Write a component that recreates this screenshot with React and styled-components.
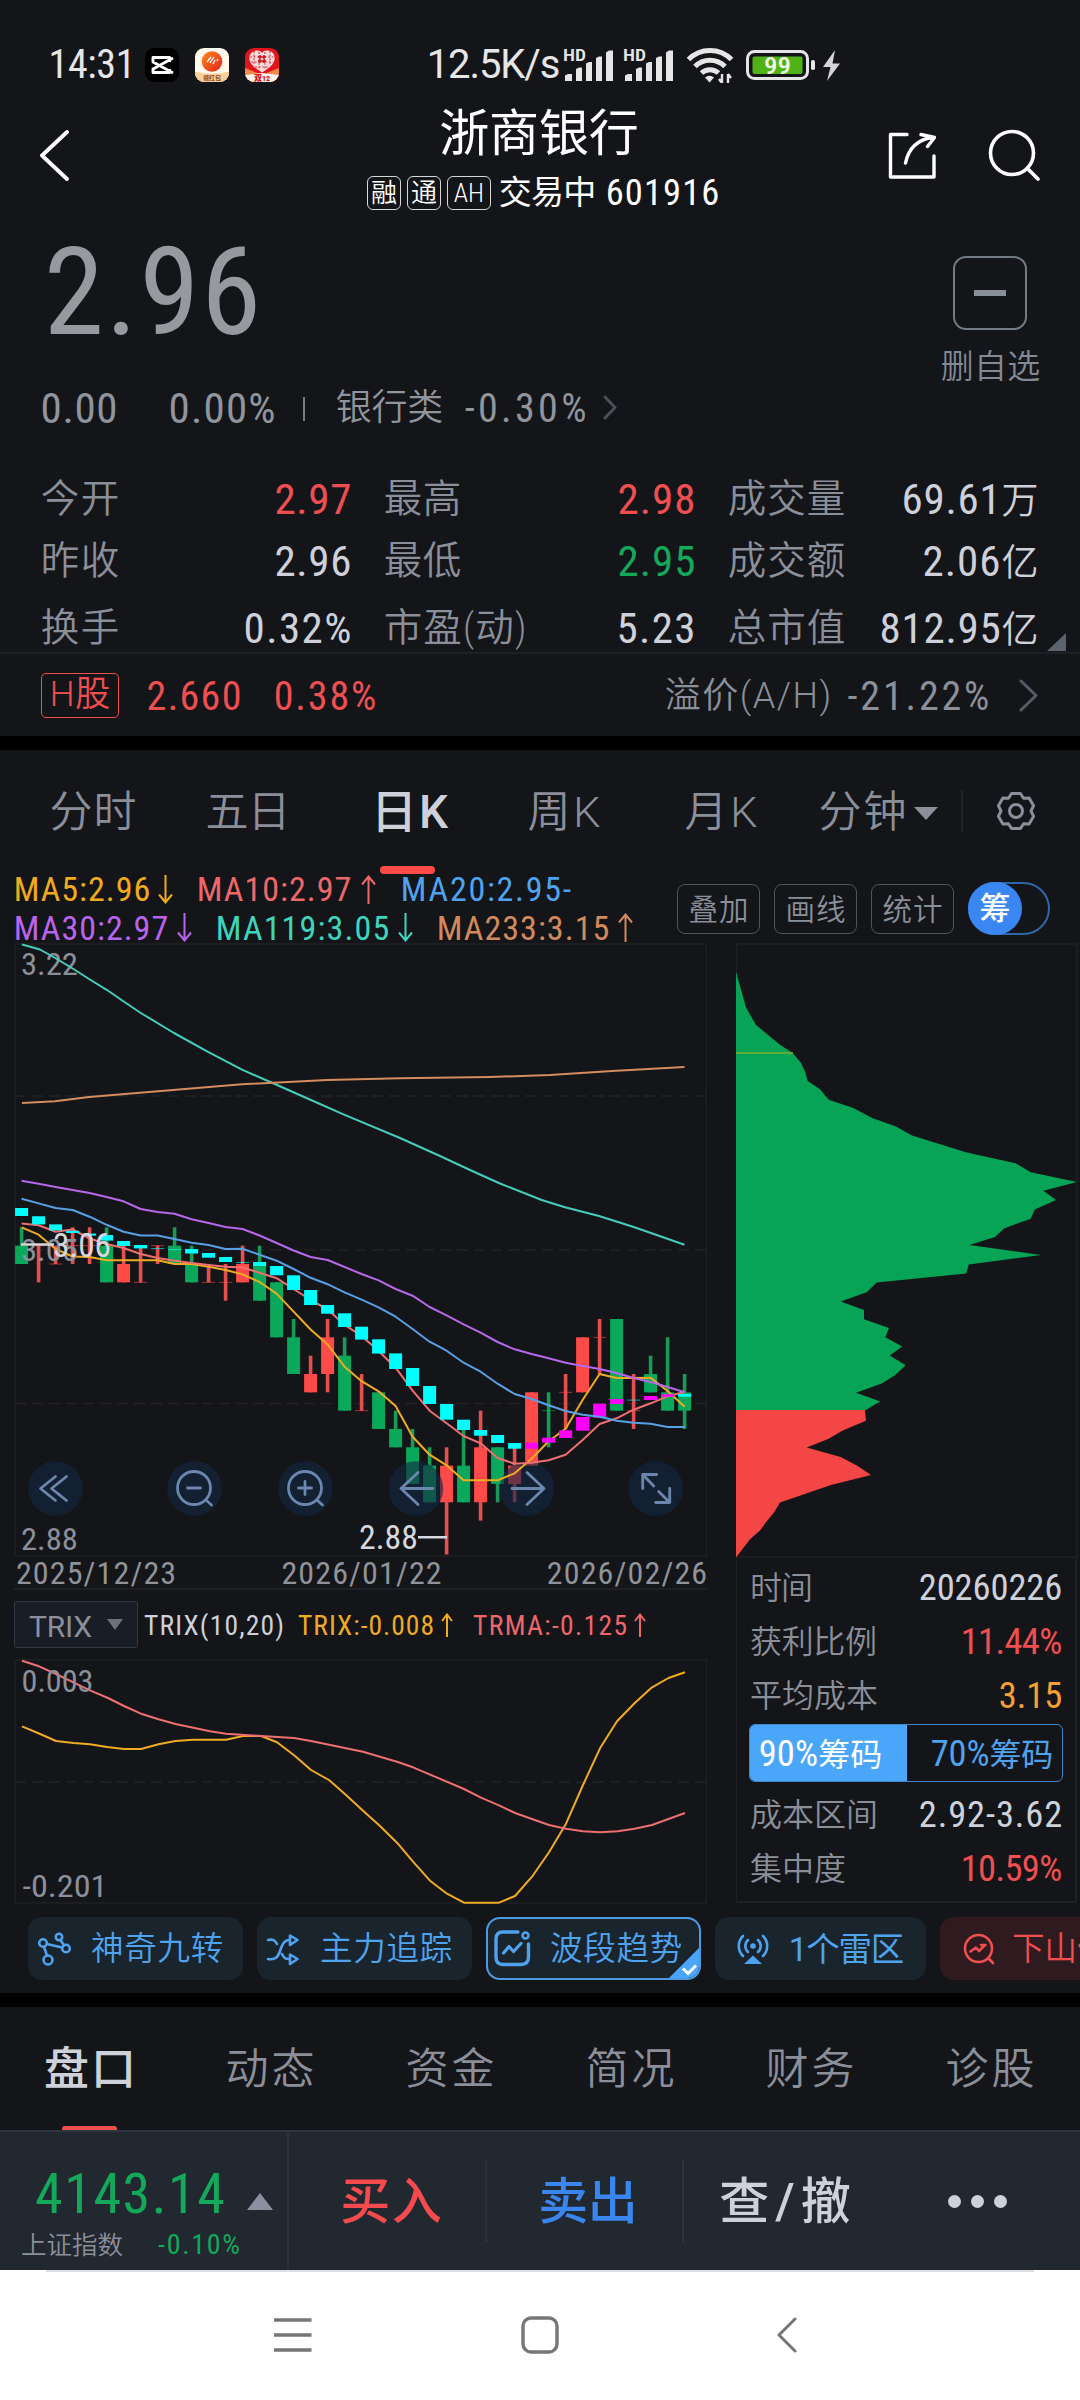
import React, { useLayoutEffect, useRef } from "react";
import styled, { createGlobalStyle, css } from "styled-components";

const c = {
  bg: "#141519",
  line: "#1e2025",
  label: "#8b8f99",
  value: "#ced1d9",
  red: "#f04f50",
  green: "#14a85b",
  blue: "#4fa3ee",
  yellow: "#efab23",
  pink: "#ee676b",
};

const Global = createGlobalStyle`
  body {
    margin: 0;
    background: ${c.bg};
    font-family: Roboto, "Noto Sans CJK SC", sans-serif;
    font-stretch: 86%;
    color: ${c.value};
  }
  * { box-sizing: border-box; }
  svg { display: block; flex: none; }
  svg text { font-family: Roboto, "Noto Sans CJK SC", sans-serif; font-stretch: 86%; }
`;

/* ---------- text that tracks itself to a given ink width ---------- */

const Tracked = styled.span`
  flex: none;
  display: inline-block;
  white-space: nowrap;
  padding-top: ${(p) => p.$drop}px;
  font-size: ${(p) => p.$size}px;
  font-weight: ${(p) => p.$weight || 400};
  font-stretch: ${(p) => p.$stretch || 86}%;
  color: ${(p) => p.$color || "inherit"};
  line-height: ${(p) => p.$lh || 1.1};
`;

function Text({ w, size, weight, color, lh, stretch, drop = 3, children }) {
  const ref = useRef(null);
  useLayoutEffect(() => {
    const el = ref.current;
    el.style.letterSpacing = "0px";
    const n = el.textContent.length;
    const natural = el.getBoundingClientRect().width;
    const side = size * 0.035;
    const ls = n > 1 ? (w + side * 2 - natural) / (n - 1) : 0;
    el.style.letterSpacing = `${ls}px`;
    el.style.marginLeft = `${-side}px`;
    el.style.marginRight = `${-ls - side}px`;
  });
  return (
    <Tracked ref={ref} $size={size} $weight={weight} $color={color} $lh={lh} $stretch={stretch} $drop={drop}>
      {children}
    </Tracked>
  );
}

const Screen = styled.div`
  width: 1080px;
  height: 2400px;
  overflow: hidden;
  background: ${c.bg};
  display: flex;
  flex-direction: column;
`;

const Space = styled.div`
  flex: none;
  width: ${(p) => p.$w}px;
`;

const Band = styled.div`
  flex: none;
  height: 14px;
  background: #000;
`;

/* ---------- status bar ---------- */

const StatusBar = styled.div`
  flex: none;
  height: 94px;
  padding: 35px 0 0 50px;
  display: flex;
  align-items: center;
  color: #e6e6e6;
`;

const CutIcon = () => (
  <svg width="34" height="34" viewBox="0 0 34 34">
    <rect width="34" height="34" rx="9" fill="#000" />
    <path d="M28 10 8 21v3.500h16.500V21M28 25 8 14V9.500h16.500V14" fill="none" stroke="#fff" strokeWidth="2.900" strokeLinejoin="round" />
  </svg>
);

const SunIcon = () => (
  <svg width="34" height="34" viewBox="0 0 34 34">
    <defs>
      <clipPath id="sunClip"><rect width="34" height="34" rx="9" /></clipPath>
      <linearGradient id="sunFill" x1="0" y1="0" x2="1" y2="1">
        <stop offset="0" stopColor="#ff8a1e" />
        <stop offset="1" stopColor="#e2211c" />
      </linearGradient>
    </defs>
    <g clipPath="url(#sunClip)">
      <rect width="34" height="34" fill="#fff8ec" />
      <circle cx="17" cy="13.500" r="10.300" fill="url(#sunFill)" />
      <path d="M0 23.500Q17 28 34 23.500V34H0Z" fill="#f8cf97" />
      <path d="M12 14l4-5M15 15l4-6M18 16l2-4M22 13l1-2" stroke="#fff" strokeWidth="1.300" />
      <text x="17" y="31.500" fontSize="6" fontWeight="700" fill="#8a4a1c" textAnchor="middle">领红包</text>
    </g>
  </svg>
);

const HeartIcon = () => (
  <svg width="34" height="34" viewBox="0 0 34 34">
    <defs><clipPath id="heartClip"><rect width="34" height="34" rx="9" /></clipPath></defs>
    <g clipPath="url(#heartClip)">
      <rect width="34" height="34" fill="#df151d" />
      <path d="M17 5C13 0 3 3 4.500 12 6 18 12 21 17 24.500 22 21 28 18 29.500 12 31 3 21 0 17 5Z" fill="#f9dcdc" />
      <path d="M5 9h24M6 14h22M10 19h14M9 3v15M14 4v18M20 4v18M25 3v15" stroke="#d83a40" strokeWidth="1.200" strokeDasharray="2 1.600" />
      <path d="M13 9h8M13 13h8M15 7v8M19 7v8" stroke="#cf1119" strokeWidth="1.500" />
      <path d="M0 20 17 27 34 20V34H0Z" fill="#f08a4b" />
      <path d="M0 27 17 25 34 27V34H0Z" fill="#fff3ee" />
      <text x="17" y="33" fontSize="8" fontWeight="800" fill="#cf1119" textAnchor="middle">双12</text>
    </g>
  </svg>
);

const Signal = () => (
  <svg width="52" height="36" viewBox="0 0 52 36">
    <text x="0" y="14" fontSize="16" fontWeight="600" fill="#e6e6e6" textLength="23" lengthAdjust="spacingAndGlyphs">HD</text>
    <g fill="#e6e6e6">
      <path d="M2 34V28.500l3-1.500h4v7Z" />
      <path d="M13 34V22l3-1.500h3V34Z" />
      <path d="M23 34V16.500l3-1.500h3V34Z" />
      <path d="M33 34V11l3-1.500h3V34Z" />
      <path d="M43 34V5.500l3-2h4V34Z" />
    </g>
  </svg>
);

const Wifi = () => (
  <svg width="48" height="36" viewBox="0 0 48 36">
    <g fill="none" stroke="#e6e6e6" strokeWidth="5">
      <path d="M2.500 12.500a30 30 0 0 1 43 0" />
      <path d="M9 19.500a21 21 0 0 1 30 0" />
      <path d="M15.500 26a12.500 12.500 0 0 1 17 0" />
    </g>
    <path d="M19 30.500a7 7 0 0 1 9 0l-4.500 5Z" fill="#e6e6e6" />
    <path d="M36 27v9m-3-4 3 4M42 36v-9m3 4-3-4" stroke="#e6e6e6" strokeWidth="2.400" fill="none" />
  </svg>
);

const Battery = () => (
  <svg width="96" height="34" viewBox="0 0 96 34">
    <rect x="1.500" y="3.500" width="60" height="27" rx="7" fill="none" stroke="#e6e6e6" strokeWidth="3" />
    <rect x="6.500" y="8.500" width="50" height="17.500" rx="2" fill="#4fb215" />
    <rect x="65" y="12" width="4" height="10" rx="1.800" fill="#e6e6e6" />
    <text x="31.500" y="26" fontSize="24" fontWeight="500" fill="#f2fbe8" textAnchor="middle" textLength="27" lengthAdjust="spacingAndGlyphs">99</text>
    <path d="M89 2 77 19h7.500l-3.500 14L94 15.500h-7.500L89 2Z" fill="#d4d4d4" />
  </svg>
);

/* ---------- title bar ---------- */

const Header = styled.header`
  flex: none;
  height: 122px;
  display: grid;
  grid-template-columns: 300px 1fr 300px;
  align-items: center;
`;

const HeaderSide = styled.div`
  display: flex;
  align-items: center;
  justify-content: ${(p) => (p.$end ? "flex-end" : "flex-start")};
  padding: 0 ${(p) => (p.$end ? 40 : 0)}px 0 ${(p) => (p.$end ? 0 : 40)}px;
  gap: 52px;
`;

const TitleBlock = styled.div`
  display: flex;
  flex-direction: column;
  align-items: center;
  gap: 12px;
  color: #fff;
  padding-right: 2px;
`;

const SubTitle = styled.div`
  display: flex;
  align-items: center;
  height: 34px;
  padding-left: 7px;
`;

const Tag = styled.span`
  height: 34px;
  width: ${(p) => p.$w}px;
  margin-right: 6px;
  border: 1.5px solid #d6d7d8;
  border-radius: 6px;
  display: flex;
  align-items: center;
  justify-content: center;
  font-size: 26px;
  font-weight: 350;
  line-height: 30px;
`;

/* ---------- quote ---------- */

const Quote = styled.section`
  flex: none;
  height: 234px;
  display: flex;
  justify-content: space-between;
  padding: 0 41px 0 42px;
`;

const PriceLine = styled.div`
  height: 148px;
  display: flex;
  align-items: center;
  padding-left: 6px;
`;

const ChangeLine = styled.div`
  height: 86px;
  display: flex;
  align-items: center;
  color: #90949c;
`;

const Tick = styled.i`
  width: 2px;
  height: 24px;
  margin-top: 4px;
  background: #777b83;
`;

const Watch = styled.div`
  padding-top: 40px;
  display: flex;
  flex-direction: column;
  align-items: center;
  gap: 15px;
`;

const MinusBox = styled.div`
  width: 74px;
  height: 74px;
  border: 2px solid #727b83;
  border-radius: 13px;
  display: flex;
  align-items: center;
  justify-content: center;
  &::after {
    content: "";
    width: 32px;
    height: 6px;
    background: #87909a;
  }
`;

const Stats = styled.section`
  flex: none;
  position: relative;
  height: 204px;
  padding: 17px 44px 0 42px;
  border-bottom: 2px solid ${c.line};
`;

const StatRow = styled.div`
  display: grid;
  grid-template-columns: 308px 309px 308px;
  column-gap: 35px;
  height: ${(p) => (p.$last ? 52 : 62)}px;
  margin-top: ${(p) => (p.$last ? 10 : 0)}px;
`;

const Stat = styled.div`
  display: flex;
  align-items: center;
  justify-content: space-between;
`;

const Unit = styled.span`
  font-size: 37px;
  font-weight: 350;
`;

const Corner = styled.i`
  position: absolute;
  right: 14px;
  bottom: 1px;
  border-left: 19px solid transparent;
  border-bottom: 18px solid #5c636e;
`;

const HShare = styled.section`
  flex: none;
  height: 82px;
  padding: 0 42px 0 41px;
  display: flex;
  align-items: center;
  color: ${c.red};
`;

const HTag = styled.span`
  width: 78px;
  height: 45px;
  border: 1.5px solid ${c.red};
  border-radius: 5px;
  display: flex;
  align-items: center;
  justify-content: center;
`;

const Grow = styled.div`
  flex: 1;
`;

const Chevron = ({ w, h, color, sw = 3, left }) => (
  <svg width={w} height={h} viewBox={`0 0 ${w} ${h}`}>
    <path
      d={left ? `M${w - 2} 2 2 ${h / 2} ${w - 2} ${h - 2}` : `M2 2 ${w - 2} ${h / 2} 2 ${h - 2}`}
      fill="none" stroke={color} strokeWidth={sw} strokeLinecap="round" strokeLinejoin="round"
    />
  </svg>
);

/* ---------- period tabs ---------- */

const Periods = styled.nav`
  flex: none;
  height: 124px;
  padding-left: 15px;
  display: flex;
`;

const Period = styled.div`
  position: relative;
  width: ${(p) => p.$w}px;
  height: 122px;
  display: flex;
  align-items: center;
  justify-content: ${(p) => (p.$start ? "flex-start" : "center")};
  ${(p) => p.$active && css`
    padding-right: 3px;
    &::after {
      content: "";
      position: absolute;
      bottom: -2px;
      left: calc(50% - 31px);
      width: 55px;
      height: 8px;
      border-radius: 4px;
      background: #ff4a4a;
    }
  `}
`;

const Gear = () => (
  <svg width="42" height="42" viewBox="0 0 42 42" fill="none" stroke="#8b8f99" strokeWidth="3" strokeLinejoin="round">
    <path d="M16.500 3.500h9l3 4.700 5.600-.3 4.500 7.800-2.600 5.300 2.600 5.300-4.500 7.800-5.600-.3-3 4.700h-9l-3-4.700-5.600.3-4.500-7.800L6 21l-2.600-5.300 4.500-7.800 5.600.3Z" />
    <circle cx="21" cy="21" r="6.500" />
  </svg>
);

/* ---------- legend ---------- */

const Legend = styled.div`
  flex: none;
  height: 69px;
  padding: 0 30px 0 15px;
  display: flex;
  align-items: center;
  justify-content: space-between;
`;

const LegendLine = styled.div`
  height: 38.5px;
  display: flex;
  align-items: center;
`;

const Tools = styled.div`
  display: flex;
  align-items: center;
  gap: 14px;
`;

const Tool = styled.div`
  width: 83px;
  height: 50px;
  border: 1.5px solid #50545e;
  border-radius: 8px;
  display: flex;
  align-items: center;
  justify-content: center;
  color: ${c.label};
`;

const Switch = styled.div`
  width: 82px;
  height: 53px;
  border: 2px solid #2f66a8;
  border-radius: 27px;
  display: flex;
  align-items: center;
`;

const Knob = styled.div`
  width: 54px;
  height: 53px;
  margin-left: -2px;
  border-radius: 27px;
  background: #3a86f3;
  color: #fff;
  font-size: 31px;
  font-weight: 500;
  line-height: 53px;
  text-align: center;
`;

const Arrow = ({ up, color, h = 29, w = 15 }) => (
  <svg width={w} height={h} viewBox={`0 0 ${w} ${h}`} fill="none" stroke={color} strokeWidth="2">
    {up ? <path d={`M${w / 2} ${h}V2M1 ${w / 2 + 2} ${w / 2} 1.500l${w / 2 - 1} ${w / 2 + 0.5}`} />
      : <path d={`M${w / 2} 0V${h - 2}M1 ${h - w / 2 - 2} ${w / 2} ${h - 1.5}l${w / 2 - 1} ${-w / 2 - 0.5}`} />}
  </svg>
);

/* ---------- charts ---------- */

const Body = styled.div`
  flex: none;
  display: flex;
  gap: 29px;
  padding-left: 14px;
`;

const Column = styled.div`
  width: ${(p) => p.$w}px;
  display: flex;
  flex-direction: column;
`;

const Dates = styled.div`
  height: 33px;
  padding: 0 1px 0 3px;
  border-bottom: 2px solid ${c.line};
  display: flex;
  align-items: center;
  justify-content: space-between;
  color: #909399;
`;

const IndicatorBar = styled.div`
  height: 69px;
  display: flex;
  align-items: center;
`;

const Picker = styled.div`
  width: 124px;
  height: 47px;
  padding: 0 14px 0 15px;
  background: #191d25;
  border: 1.5px solid #323843;
  border-radius: 3px;
  display: flex;
  align-items: center;
  justify-content: space-between;
`;

const at = (i) => 21.6 + 17 * i;
const lv = (n) => 1319 + 18.33 * n;

/* direction, high, body top, body bottom, low — in one-cent steps */
const candles = [
  ["g", -5, -4, -3, -3], ["r", -4, -4, -4, -2], ["r", -4, -3, -3, -3], ["r", -5, -4, -4, -3], ["r", -5, -4, -4, -3],
  ["g", -5, -4, -2, -2], ["r", -4, -3, -2, -2], ["r", -4, -2, -2, -2], ["r", -4, -4, -4, -3], ["g", -5, -4, -3, -3],
  ["g", -4, -3, -2, -2], ["r", -3, -2, -2, -2], ["r", -3, -2, -2, -1], ["r", -4, -3, -2, -2], ["g", -4, -3, -1, -1],
  ["g", -2, -2, 1, 1], ["g", 0, 1, 3, 3], ["r", 2, 3, 4, 4], ["r", 0, 1, 3, 4], ["g", 1, 2, 5, 5],
  ["r", 3, 5, 5, 5], ["g", 4, 4, 6, 6], ["g", 5, 6, 7, 7], ["g", 6, 7, 9, 9], ["g", 7, 8, 10, 10],
  ["r", 7, 8, 10, 12.85], ["g", 6, 8, 10, 10], ["r", 5, 7, 10, 11], ["g", 7, 7, 9, 10], ["r", 7, 8, 9, 10],
  ["r", 4, 4, 8, 8], ["g", 4, 5, 5, 7], ["r", 3, 4, 4, 6], ["r", 1, 1, 4, 4], ["r", 0, 1, 1, 3],
  ["g", 0, 0, 5, 5], ["r", 3, 5, 5, 6], ["g", 2, 3, 4, 4], ["g", 1, 4, 5, 5], ["g", 3, 4, 5, 6],
];

/* trend blocks: top, bottom */
const blocks = [
  [1208, 1216], [1216.3, 1224.4], [1224.4, 1230.4], [1230.8, 1233], [1233.6, 1235.6], [1235, 1240.6], [1241, 1246],
  [1245, 1248.4], [1248, 1249], [1249, 1250], [1249, 1253.5], [1253, 1257.7], [1257, 1262], [1262, 1263], [1262, 1266],
  [1266, 1275.3], [1275.3, 1290], [1290, 1305], [1305, 1313.7], [1313.3, 1327], [1326.7, 1339.6], [1339.3, 1353.6],
  [1353.4, 1369], [1368, 1386], [1386, 1404], [1404, 1419.7], [1419.7, 1430], [1430, 1435.7], [1435, 1443], [1443, 1448.7],
  [1442.7, 1448.7], [1437.7, 1442.7], [1430.3, 1438], [1417, 1430.7], [1403.7, 1417.7], [1399, 1404], [1399.6, 1400.6],
  [1396, 1400], [1394.3, 1396.7], [1394, 1396.7],
];

const ma5 = [1227.4, 1234.7, 1249, 1256.5, 1257, 1260.3, 1260.3, 1260.3, 1260.3, 1264, 1264, 1266.7, 1270, 1274.4, 1282, 1293.6, 1311.6, 1329.5, 1344.5, 1366.7, 1381.2, 1391.3, 1406, 1436.7, 1454.7, 1465.3, 1480.3, 1480.3, 1480.3, 1473.3, 1458.7, 1441.3, 1428.7, 1400, 1374, 1378, 1378, 1377.7, 1391, 1406.7];
const ma10 = [1223.5, 1225.3, 1231.7, 1229.5, 1238.5, 1244, 1248, 1254, 1258, 1260.7, 1263, 1265, 1266.7, 1267.5, 1272.7, 1278.2, 1289, 1300, 1309.4, 1324.8, 1336, 1351, 1367.7, 1390.7, 1410.7, 1423.3, 1436, 1443.3, 1458, 1463.7, 1462.7, 1460.3, 1454.7, 1440, 1424, 1418.3, 1409.7, 1403.3, 1396.3, 1392];
const ma20 = [1198.8, 1203.4, 1208, 1210, 1216.7, 1224.8, 1231.7, 1235.5, 1235.5, 1239, 1242.8, 1245, 1249, 1248.8, 1254.7, 1260.7, 1269, 1277.8, 1284.2, 1292.4, 1299.6, 1307.3, 1316.7, 1329, 1341.7, 1350.7, 1362.7, 1371.7, 1383.7, 1394, 1399, 1405.3, 1411, 1414.7, 1416.7, 1420.7, 1422.7, 1423.7, 1427, 1427];
const ma30 = [1180.8, 1183.8, 1187, 1190, 1193, 1197, 1201.3, 1209, 1212, 1213.7, 1219.3, 1223, 1227, 1229, 1235.5, 1243, 1250.5, 1257, 1260, 1267, 1274, 1280.4, 1289, 1295.7, 1307, 1315.3, 1324.3, 1332.7, 1342, 1349.3, 1354, 1358.3, 1362.7, 1366, 1369, 1373, 1378, 1382, 1387, 1392.3];
const ma119 = "22,944.5 40,949.5 56,958.5 72.7,968.5 89,979 106.7,989.8 123,1001 140,1012.5 174,1033 208,1051.8 242,1069.7 277,1085 311,1100 344,1114.6 400,1138 440,1156 470,1170 500,1183.5 541.7,1200 565,1207.3 599,1216 633,1226.7 684.5,1244.7";
const ma233 = "22,1103 55,1101.3 89,1097 140,1092.8 242,1084.3 327,1080 400,1078.3 490,1077 550,1075 612,1071 684.5,1067";

const series = (ys) => ys.map((y, i) => `${at(i)},${y}`).join(" ");

const trix = "22,1726.3 39,1733.5 56,1741 73.5,1743 90,1744.3 107,1747 124,1749 141,1749 158.5,1744.3 175.5,1741 193,1739.7 226,1739.7 243,1736 261,1736 277,1742.3 295,1756 311,1770 329,1780 346,1795 363,1810.7 380,1826 397,1842.7 413,1861.7 430,1880.7 447,1893.7 464,1902.7 499,1902.7 515,1896 532,1876.7 549,1852.3 566,1823.7 583,1785 600,1748.3 617,1721.3 634.5,1703.3 652,1687.3 668.5,1678 685,1672.3";
const trma = "22,1660.7 39,1666.3 56,1674 90,1690.3 108,1698 124,1706 141,1713.7 158.5,1719.3 175.5,1724 210,1731.3 226,1733.7 261,1736 294,1738 311,1741 363,1751.7 397,1761.7 413,1767.3 464,1789 481,1797.7 499,1805.3 515,1813 549,1825 566,1828.7 583,1831.3 600,1832.3 617.5,1831.3 634.5,1828.7 652,1825 685,1813";

const chipsGreen = "736,971.7 746,1007.5 756,1025 780,1044.7 792.7,1053 800.7,1062.6 805.3,1072.2 807.7,1081 820,1089.2 828.7,1099.8 853.3,1108 872.7,1118.2 896,1126.4 912,1135.6 966.7,1152.6 1015.7,1163.2 1030.7,1172.3 1077,1182 1043.3,1190.7 1056,1199.9 1034.7,1209.5 1030.7,1218.7 1004,1228.4 995,1237 969.3,1245 1041.3,1255 968.7,1264.6 966.3,1273.4 876.7,1282.5 866.7,1292.2 840.7,1301.4 864,1310 864,1319.3 889,1328 885.3,1337.2 902.3,1346.4 889.7,1355.6 905.7,1365.2 895,1375.3 881.7,1383.6 856,1392.8 880.3,1401.5 865.7,1410 736,1410";
const chipsRed = "736,1410 865,1410 866,1420.8 842.7,1430.4 828.7,1438.7 806.7,1447.4 840.7,1457 857.3,1465.8 871,1475 831,1485 780,1502.5 774,1512.6 766,1522.2 760,1530.5 750,1539.2 736,1557.6";

const Line = ({ points, color }) => (
  <polyline points={points} fill="none" stroke={color} strokeWidth="2" strokeLinejoin="round" />
);

const Mark = ({ x, y, w, size, color, children }) => (
  <text x={x} y={y} fontSize={size} fill={color} textLength={w} lengthAdjust="spacingAndGlyphs">{children}</text>
);

const RoundButton = ({ x, children }) => (
  <g transform={`translate(${x} 1488.5)`} fill="none" stroke="#6c86ae" strokeWidth="2.8" strokeLinecap="round" strokeLinejoin="round">
    <circle r="27.300" fill="#142742" fillOpacity=".62" stroke="none" />
    {children}
  </g>
);

const KChart = () => (
  <svg width="693" height="614" viewBox="14 943 693 614">
    <rect x="15" y="944" width="691.500" height="612" fill="none" stroke={c.line} strokeWidth="1.500" />
    {[1096, 1250, 1403.5].map((y) => (
      <path key={y} d={`M15 ${y}H706`} stroke="#212328" strokeWidth="1.500" strokeDasharray="11 6" />
    ))}
    <Mark x="21" y="975" w="57" size="31.500" color="#8b8f99">3.22</Mark>
    <Mark x="21" y="1550" w="57" size="31.500" color="#8b8f99">2.88</Mark>
    {candles.map(([dir, hi, top, bot, lo], i) => {
      const fill = dir === "g" ? "#0aa85a" : "#ff4a4a";
      const flat = top === bot;
      return (
        <g key={i}>
          <rect x={at(i) - 1.8} y={lv(hi)} width="3.600" height={lv(lo) - lv(hi)} fill={dir === "g" ? "#199a56" : "#e5504f"} />
          {flat
            ? <rect x={at(i) - 6.5} y={lv(top) - 0.5} width="13" height="1" fill={fill} opacity=".6" />
            : <rect x={at(i) - 6.5} y={lv(top)} width="13" height={lv(bot) - lv(top)} fill={fill} />}
        </g>
      );
    })}
    <RoundButton x={55.5}><path d="M0-12-15 0 0 12M11-12-4 0 11 12" /></RoundButton>
    <RoundButton x={194.5}><circle r="16.500" cx="-.5" cy="-.5" /><path d="M-7-.5H6M12 12 17 16.500" /></RoundButton>
    <RoundButton x={305.5}><circle r="16.500" cx="-.5" cy="-.5" /><path d="M-7-.5H6M-.5-7V6M12 12 17 16.500" /></RoundButton>
    <RoundButton x={416}><path d="M2-16-15 0 2 16M-15 0H17" /></RoundButton>
    <RoundButton x={527}><path d="M0-16 17 0 0 16M17 0H-15" /></RoundButton>
    <RoundButton x={655.7}><path d="M-13 0V-14H1M-13-14-2-2.500M14 0V14H0M14 14 3 3" /></RoundButton>
    <Line points={series(ma5)} color={c.yellow} />
    <Line points={series(ma10)} color="#ee6f70" />
    {blocks.map(([t, b], i) => (
      <rect key={i} x={at(i) - 6.5} y={t} width="13" height={b - t} opacity={b - t < 1.5 ? 0.6 : 1} fill={i > 29 && i < 39 && i !== 36 ? "#ff00ff" : "#00ffff"} />
    ))}
    <Line points={series(ma20)} color="#58a0e6" />
    <Line points={series(ma30)} color="#b568e8" />
    <Line points={ma119} color="#45cdb9" />
    <Line points={ma233} color="#d58c5f" />
    <Mark x="21" y="1261" w="57" size="31.500" color="#8b8f99">3.05</Mark>
    <path d="M21 1244.500H54M418 1537.300H447" stroke="#d6d8dd" strokeWidth="2.400" />
    <Mark x="53" y="1257" w="58" size="34" color="#d6d8dd">3.06</Mark>
    <Mark x="359" y="1549" w="59" size="34" color="#d6d8dd">2.88</Mark>
  </svg>
);

const TrixChart = () => (
  <svg width="693" height="245" viewBox="14 1659 693 245">
    <rect x="15" y="1660" width="691.500" height="243" fill="none" stroke={c.line} strokeWidth="1.500" />
    <path d="M15 1782H706" stroke="#212328" strokeWidth="1.500" strokeDasharray="11 6" />
    <Line points={trix} color={c.yellow} />
    <Line points={trma} color="#ee6f70" />
    <Mark x="21.500" y="1692" w="72" size="32" color="#8b8f99">0.003</Mark>
    <Mark x="22.500" y="1897" w="85" size="32" color="#8b8f99">-0.201</Mark>
  </svg>
);

const ChipChart = () => (
  <svg width="344" height="615" viewBox="736 943 344 615">
    <rect x="736.500" y="944" width="340.500" height="613" fill="none" stroke={c.line} strokeWidth="1.500" />
    <polygon points={chipsGreen} fill="#08a455" />
    <polygon points={chipsRed} fill="#f54646" />
    <path d="M736 1053H793" stroke="#7fae34" strokeWidth="1.500" />
  </svg>
);

const Info = styled.div`
  width: 341px;
  height: 345px;
  padding: 2px 14px 0;
  border: solid ${c.line};
  border-width: 0 2px 2px 1px;
`;

const InfoRow = styled.div`
  height: 54px;
  display: flex;
  align-items: center;
  justify-content: space-between;
`;

const Range = styled.div`
  height: 58px;
  width: 314px;
  margin: 2px 0 5px -2px;
  border: 1.5px solid #3f86c9;
  border-radius: 6px;
  display: flex;
  overflow: hidden;
`;

const RangeSide = styled.div`
  flex: ${(p) => (p.$on ? "0 0 157px" : "1")};
  padding-left: ${(p) => (p.$on ? 10 : 25)}px;
  display: flex;
  align-items: center;
  background: ${(p) => (p.$on ? "#4aa6f8" : "transparent")};
  color: ${(p) => (p.$on ? "#fff" : c.blue)};
`;

const Small = styled.span`
  font-size: 32px;
`;

/* ---------- strategy chips ---------- */

const ChipRow = styled.div`
  flex: none;
  height: 89px;
  padding: 13px 0 0 28px;
  display: flex;
  gap: 14px;
  overflow: hidden;
`;

const Chip = styled.div`
  flex: none;
  position: relative;
  width: ${(p) => p.$w}px;
  height: 63px;
  padding-left: ${(p) => p.$pad}px;
  border-radius: 14px;
  border: 2px solid ${(p) => (p.$on ? "#4c9be2" : "transparent")};
  background: ${(p) => (p.$warn ? "#2f1b1f" : "#1a242d")} border-box;
  color: ${(p) => (p.$warn ? c.red : c.blue)};
  display: flex;
  align-items: center;
  overflow: hidden;
`;

const Picked = styled.svg`
  position: absolute;
  right: -1px;
  bottom: -1px;
`;

const Glyph = styled.svg`
  fill: none;
  stroke: currentColor;
  stroke-width: 2.6;
  stroke-linecap: round;
  stroke-linejoin: round;
  margin-right: ${(p) => p.$mr}px;
`;

/* ---------- bottom ---------- */

const Sections = styled.nav`
  flex: none;
  height: 123px;
  display: grid;
  grid-template-columns: repeat(6, 180px);
`;

const SectionTab = styled.div`
  position: relative;
  display: flex;
  align-items: center;
  justify-content: center;
  color: ${(p) => (p.$active ? c.value : c.label)};
  &::after {
    content: "";
    display: ${(p) => (p.$active ? "block" : "none")};
    position: absolute;
    bottom: 0;
    left: 62px;
    width: 55px;
    height: 4px;
    border-radius: 3px 3px 0 0;
    background: #f04f50;
  }
`;

const TradeBar = styled.div`
  flex: none;
  height: 140px;
  background: #222830;
  border-top: 2px solid #2d3540;
  display: grid;
  grid-template-columns: 289px 197px 197px 197px 200px;
`;

const IndexCell = styled.div`
  border-right: 2px solid #2c323a;
  padding-top: 29px;
`;

const IndexLine = styled.div`
  height: ${(p) => p.$h}px;
  padding-left: ${(p) => p.$pl}px;
  display: flex;
  align-items: center;
`;

const Up = styled.i`
  margin: 18px 0 0 24px;
  border: 13px solid transparent;
  border-top: 0;
  border-bottom: 17px solid #8b90a0;
`;

const Action = styled.div`
  display: flex;
  align-items: center;
  justify-content: center;
  gap: 10px;
  position: relative;
  padding-left: ${(p) => (p.$more ? 0 : 7)}px;
  padding-right: ${(p) => (p.$more ? 5 : 0)}px;
  & + &::before {
    content: "";
    position: absolute;
    left: -1px;
    top: 28px;
    width: 2px;
    height: 82px;
    background: #2d333c;
  }
`;

const Dot = styled.i`
  width: 13px;
  height: 13px;
  border-radius: 50%;
  background: #ced1d9;
`;

const SystemNav = styled.div`
  flex: none;
  height: 130px;
  background: #fff;
  display: flex;
  align-items: center;
  padding-left: 274px;
  position: relative;
  &::before {
    content: "";
    position: absolute;
    left: 46px;
    right: 46px;
    top: 0;
    height: 1.5px;
    background: #dde1e6;
  }
`;

const stats = [
  [["今开", 76, "2.97", "", 74, c.red], ["最高", 75, "2.98", "", 75, c.red], ["成交量", 115, "69.61", "万", 134]],
  [["昨收", 76, "2.96", "", 74], ["最低", 75, "2.95", "", 75, c.green], ["成交额", 115, "2.06", "亿", 113]],
  [["换手", 76, "0.32%", "", 105], ["市盈(动)", 140, "5.23", "", 76], ["总市值", 115, "812.95", "亿", 156]],
];

const legend = [
  [["MA5:2.96", 134, "down", "#efab1c", 9, 25], ["MA10:2.97", 152, "up", "#ee676b", 11, 26], ["MA20:2.95-", 168, null, "#4fa3ee", 0, 0]],
  [["MA30:2.97", 152, "down", "#b964ec", 10, 25], ["MA119:3.05", 171, "down", "#3ed5bd", 10, 25], ["MA233:3.15", 170, "up", "#d28a5d", 10, 0]],
];

export default function App() {
  return (
    <>
      <Global />
      <Screen>
        <StatusBar>
          <Text w={84} size={40} weight={450} drop={0}>14:31</Text>
          <Space $w={11} /><CutIcon />
          <Space $w={16} /><SunIcon />
          <Space $w={16} /><HeartIcon />
          <Space $w={149} />
          <Text w={131} size={40} weight={450} stretch={95} drop={0}>12.5K/s</Text>
          <Space $w={4} /><Signal />
          <Space $w={8} /><Signal />
          <Space $w={11} /><Wifi />
          <Space $w={12} /><Battery />
        </StatusBar>

        <Header>
          <HeaderSide><Chevron left w={29} h={51} color="#fff" sw={3.8} /></HeaderSide>
          <TitleBlock>
            <Text w={196} size={50} lh="60px">浙商银行</Text>
            <SubTitle>
              <Tag $w={34}>融</Tag>
              <Tag $w={34}>通</Tag>
              <Tag $w={44}>AH</Tag>
              <Space $w={3} />
              <Text w={95} size={33} drop={1}>交易中</Text>
              <Space $w={12} />
              <Text w={111} size={36.5} drop={1}>601916</Text>
            </SubTitle>
          </TitleBlock>
          <HeaderSide $end>
            <svg width="48" height="50" viewBox="888 130 48 50" fill="none" stroke="#fff" strokeWidth="3.400" strokeLinecap="round" strokeLinejoin="round">
              <path d="M907 134.500H890.500V177H934V156M905.500 163Q910 141 932 137.500M921 134.500 934.500 137.500 927.500 146.500" />
            </svg>
            <svg width="52" height="52" viewBox="988 129 52 52" fill="none" stroke="#fff" strokeWidth="3.600" strokeLinecap="round">
              <circle cx="1012" cy="153" r="21.500" /><path d="M1028 169 1038 179" />
            </svg>
          </HeaderSide>
        </Header>

        <Quote>
          <div>
            <PriceLine><Text w={209} size={122} weight={450} color="#98999f" drop={6}>2.96</Text></PriceLine>
            <ChangeLine>
              <Text w={74} size={43}>0.00</Text><Space $w={54} />
              <Text w={104} size={43}>0.00%</Text><Space $w={29} />
              <Tick /><Space $w={32} />
              <Text w={105} size={36} weight={350}>银行类</Text><Space $w={24} />
              <Text w={119} size={40}>-0.30%</Text><Space $w={18} />
              <Chevron w={14} h={25} color="#4a4f58" />
            </ChangeLine>
          </div>
          <Watch>
            <MinusBox />
            <Text w={97} size={33} weight={350} color="#818994" lh="38px">删自选</Text>
          </Watch>
        </Quote>

        <Stats>
          {stats.map((row, r) => (
            <StatRow key={r} $last={r === 2}>
              {row.map(([name, nw, v, unit, vw, color]) => (
                <Stat key={name}>
                  <Text w={nw} size={38.5} weight={350} color={c.label}>{name}</Text>
                  <Text w={vw} size={43} color={color || c.value}>{v}{unit && <Unit>{unit}</Unit>}</Text>
                </Stat>
              ))}
            </StatRow>
          ))}
          <Corner />
        </Stats>

        <HShare>
          <HTag><Text w={58} size={35} weight={350} stretch={100} drop={1}>H股</Text></HTag>
          <Space $w={29} />
          <Text w={92} size={40}>2.660</Text><Space $w={35} />
          <Text w={100} size={40}>0.38%</Text>
          <Grow />
          <Text w={164} size={36} weight={350} stretch={100} color={c.label}>溢价(A/H)</Text><Space $w={19} />
          <Text w={139} size={40} color={c.label}>-21.22%</Text><Space $w={31} />
          <Chevron w={19} h={33} color="#555d68" />
        </HShare>

        <Band />

        <Periods>
          <Period $w={156}><Text w={84} size={43} weight={350} color={c.label}>分时</Text></Period>
          <Period $w={154}><Text w={82} size={43} weight={350} color={c.label}>五日</Text></Period>
          <Period $w={172} $active><Text w={74} size={46} weight={500} stretch={100}>日K</Text></Period>
          <Period $w={134}><Text w={70} size={43} weight={350} stretch={100} color={c.label}>周K</Text></Period>
          <Period $w={180}><Text w={70} size={43} weight={350} stretch={100} color={c.label}>月K</Text></Period>
          <Period $w={240} $start>
            <Space $w={9} />
            <Text w={85} size={43} weight={350} color={c.label}>分钟</Text>
            <Space $w={9} />
            <svg width="24" height="18" viewBox="0 0 24 18"><path d="M0 5H24L12 18Z" fill="#8b8f99" /></svg>
            <Space $w={23} />
            <svg width="2" height="42"><rect width="2" height="42" fill="#1e2126" /></svg>
            <Space $w={32} />
            <Gear />
          </Period>
        </Periods>

        <Legend>
          <div>
            {legend.map((row, r) => (
              <LegendLine key={r}>
                {row.map(([t, w, dir, color, g1, g2]) => (
                  <React.Fragment key={t}>
                    <Text w={w} size={34} color={color} drop={1}>{t}</Text>
                    <Space $w={g1} />
                    {dir && <Arrow up={dir === "up"} color={color} />}
                    <Space $w={g2} />
                  </React.Fragment>
                ))}
              </LegendLine>
            ))}
          </div>
          <Tools>
            {["叠加", "画线", "统计"].map((t) => (
              <Tool key={t}><Text w={58} size={29.5} weight={350}>{t}</Text></Tool>
            ))}
            <Switch><Knob>筹</Knob></Switch>
          </Tools>
        </Legend>

        <Body>
          <Column $w={693}>
            <KChart />
            <Dates>
              <Text w={158} size={32}>2025/12/23</Text>
              <Text w={158} size={32}>2026/01/22</Text>
              <Text w={158} size={32}>2026/02/26</Text>
            </Dates>
            <IndicatorBar>
              <Picker>
                <Text w={61} size={30} color={c.label} stretch={100}>TRIX</Text>
                <svg width="16" height="11" viewBox="0 0 16 11"><path d="M0 0H16L8 11Z" fill="#6c717b" /></svg>
              </Picker>
              <Space $w={7} />
              <Text w={138} size={27.5} color={c.value}>TRIX(10,20)</Text><Space $w={16} />
              <Text w={134} size={27.5} color={c.yellow}>TRIX:-0.008</Text><Space $w={8} />
              <Arrow up w={12} h={24} color={c.yellow} /><Space $w={21} />
              <Text w={152} size={27.5} color={c.pink}>TRMA:-0.125</Text><Space $w={8} />
              <Arrow up w={12} h={24} color={c.pink} />
            </IndicatorBar>
            <TrixChart />
          </Column>
          <Column $w={344}>
            <ChipChart />
            <Info>
              <InfoRow><Text w={61} size={32} weight={350} color={c.label}>时间</Text><Text w={141} size={36.5}>20260226</Text></InfoRow>
              <InfoRow><Text w={125} size={32} weight={350} color={c.label}>获利比例</Text><Text w={99} size={36.5} color={c.red}>11.44%</Text></InfoRow>
              <InfoRow><Text w={126} size={32} weight={350} color={c.label}>平均成本</Text><Text w={61} size={36.5} color="#f5a033">3.15</Text></InfoRow>
              <Range>
                <RangeSide $on><Text w={121} size={36.5}>90%<Small>筹码</Small></Text></RangeSide>
                <RangeSide><Text w={120} size={36.5} weight={370}>70%<Small>筹码</Small></Text></RangeSide>
              </Range>
              <InfoRow><Text w={126} size={32} weight={350} color={c.label}>成本区间</Text><Text w={141} size={36.5}>2.92-3.62</Text></InfoRow>
              <InfoRow><Text w={94} size={32} weight={350} color={c.label}>集中度</Text><Text w={99} size={36.5} color={c.red}>10.59%</Text></InfoRow>
            </Info>
          </Column>
        </Body>

        <ChipRow>
          <Chip $w={215} $pad={6}>
            <Glyph $mr={20} width="36" height="36" viewBox="0 0 36 36">
              <circle cx="7" cy="12" r="3.800" /><circle cx="23" cy="6" r="3.200" /><circle cx="30" cy="17.500" r="3.800" /><circle cx="12" cy="29" r="4.500" />
              <path d="M11 13l15 3.500M24.500 9l3.500 5.500M8 16l3 8.500" />
            </Glyph>
            <Text w={130} size={32.5} weight={350}>神奇九转</Text>
          </Chip>
          <Chip $w={215} $pad={6}>
            <Glyph $mr={20} width="36" height="36" viewBox="0 0 36 36">
              <path d="M3 9c5-1 7 0 9 4M3 28c8 1 10-2 12-8s4-11 9-11M17 23c2 4 3 5 7 5" />
              <path d="M25 4.500 32.500 9 25 14ZM25 23.500 32.500 28 25 33Z" />
            </Glyph>
            <Text w={130} size={32.5} weight={350}>主力追踪</Text>
          </Chip>
          <Chip $w={215} $pad={6} $on>
            <Glyph $mr={20} width="37" height="37" viewBox="0 0 37 37">
              <path d="M24 2H9Q2 2 2 9V27Q2 34.500 9 34.500H27Q34.500 34.500 34.500 27V14" strokeWidth="3.400" />
              <circle cx="31.500" cy="5.500" r="3" />
              <path d="M9.500 23 15 16.500 19.500 21.500 27 13.500" strokeWidth="3.200" />
            </Glyph>
            <Text w={130} size={32.5} weight={350}>波段趋势</Text>
            <Picked width="32" height="32" viewBox="0 0 32 32">
              <path d="M32 0V18Q32 32 18 32H0Z" fill="#4aa6f8" />
              <path d="M15 21.500 20 26.500 28 18.500" fill="none" stroke="#fff" strokeWidth="3" />
            </Picked>
          </Chip>
          <Chip $w={211} $pad={20}>
            <Glyph $mr={21} width="32" height="32" viewBox="0 0 32 32">
              <circle cx="16" cy="13" r="2.800" fill="currentColor" stroke="none" />
              <path d="M11 19a8 8 0 0 1 0-12M21 19a8 8 0 0 0 0-12M6 23a14 14 0 0 1 0-20M26 23a14 14 0 0 0 0-20" />
              <path d="M16 22.500 25 31H7Z" fill="currentColor" stroke="none" />
            </Glyph>
            <Text w={113} size={33.5} weight={370} stretch={100}>1个雷区</Text>
          </Chip>
          <Chip $w={215} $pad={21} $warn>
            <Glyph $mr={18} width="32" height="32" viewBox="0 0 32 32">
              <circle cx="15.500" cy="15.500" r="13.500" /><path d="M26 26 30 30" />
              <path d="M7.500 18.500 13 14.500 16 18 21.500 12.500M18 12H22.500" />
            </Glyph>
            <Text w={128} size={32.5} weight={350}>下山信号</Text>
          </Chip>
        </ChipRow>

        <Band />

        <Sections>
          <SectionTab $active><Text w={89} size={45} weight={500}>盘口</Text></SectionTab>
          {["动态", "资金", "简况", "财务", "诊股"].map((t) => (
            <SectionTab key={t}><Text w={86} size={43} weight={350}>{t}</Text></SectionTab>
          ))}
        </Sections>

        <TradeBar>
          <IndexCell>
            <IndexLine $h={62} $pl={37}><Text w={186} size={56} color={c.green} drop={5}>4143.14</Text><Up /></IndexLine>
            <IndexLine $h={44} $pl={22}>
              <Text w={100} size={25.5} weight={350} color={c.label} drop={1}>上证指数</Text><Space $w={37} />
              <Text w={80} size={28} color={c.green} drop={0}>-0.10%</Text>
            </IndexLine>
          </IndexCell>
          <Action><Text w={98} size={50} weight={500} color="#f64b4e">买入</Text></Action>
          <Action><Text w={96} size={50} weight={500} color="#3a86ee">卖出</Text></Action>
          <Action><Text w={128} size={50} weight={500} stretch={100}>查/撤</Text></Action>
          <Action $more><Dot /><Dot /><Dot /></Action>
        </TradeBar>

        <SystemNav>
          <svg width="38" height="36" viewBox="0 0 38 36"><path d="M0 3H37.500M0 18H37.500M0 33H37.500" stroke="#767676" strokeWidth="3.600" /></svg>
          <Space $w={209} />
          <svg width="38" height="38" viewBox="0 0 38 38"><rect x="2" y="2" width="34" height="34" rx="8" fill="none" stroke="#767676" strokeWidth="3.400" /></svg>
          <Space $w={218} />
          <Chevron left w={20} h={36} color="#767676" sw={3} />
        </SystemNav>
      </Screen>
    </>
  );
}
